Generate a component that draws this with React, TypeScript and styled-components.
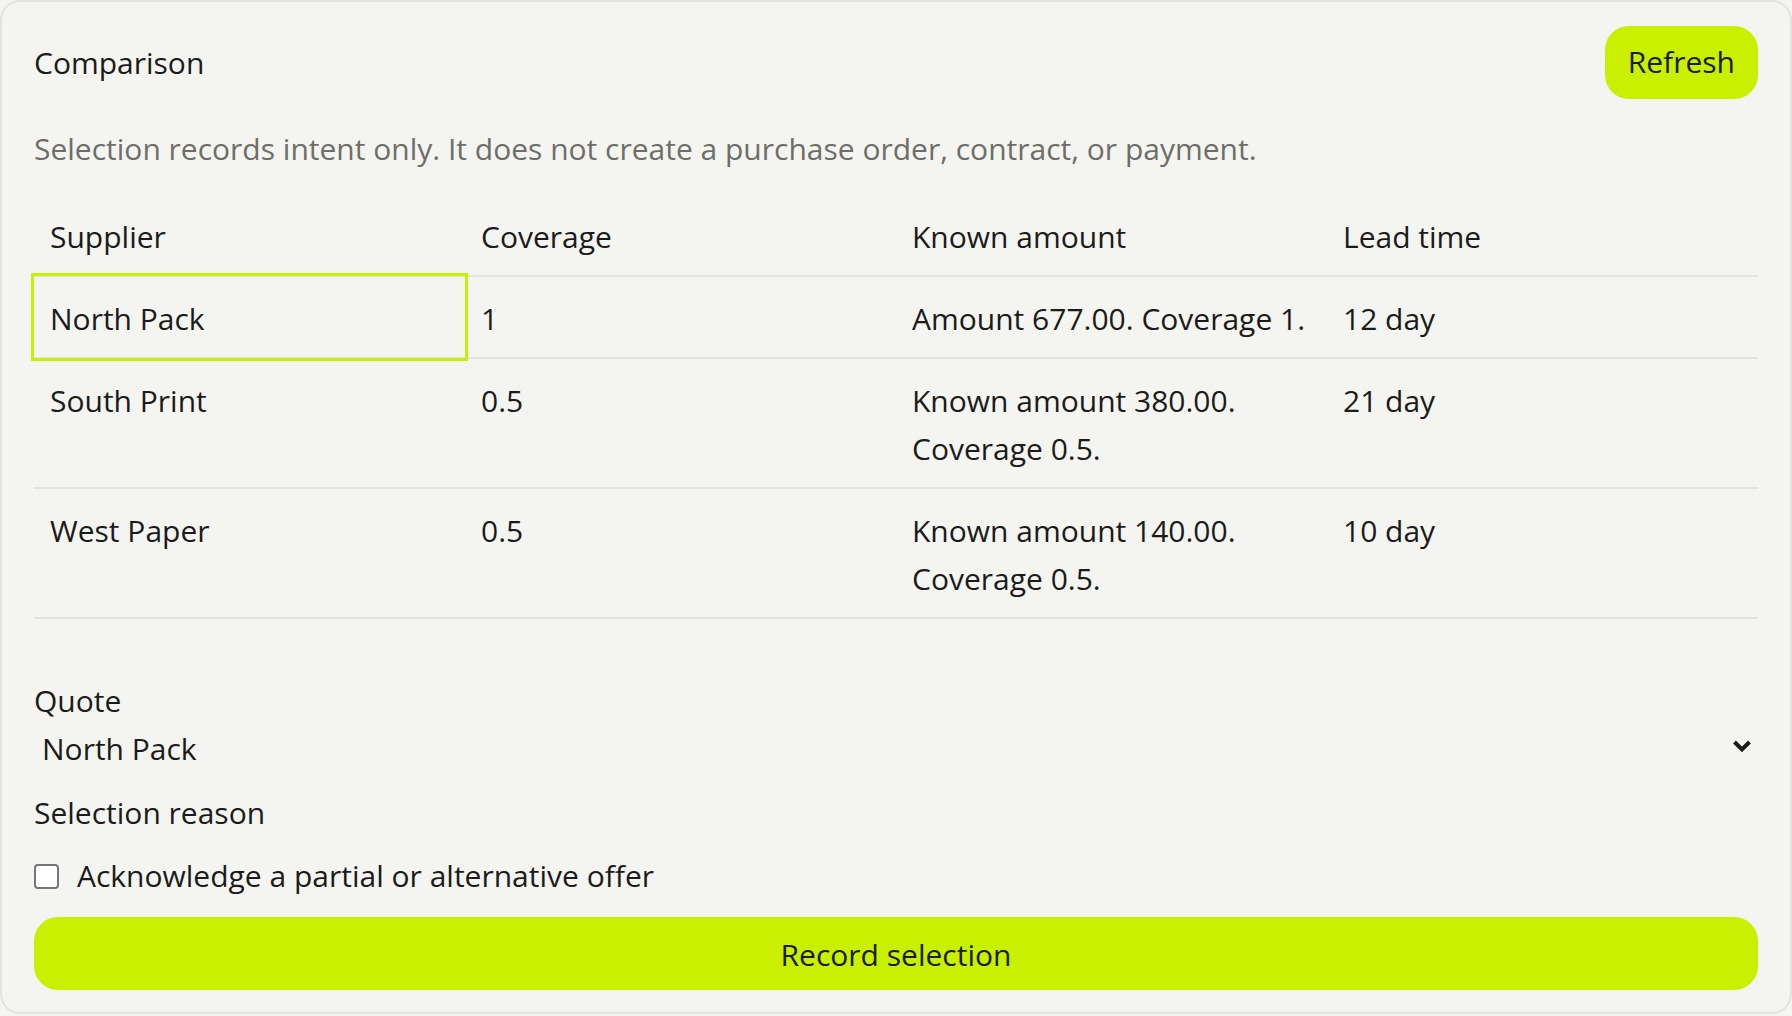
import React, { useState } from 'react'
import styled, { createGlobalStyle } from 'styled-components'

type Quote = {
  id: string
  supplier: string
  coverage: string
  known: string
  lead: string
}

const quotes: Quote[] = [
  { id: 'north', supplier: 'North Pack', coverage: '1', known: 'Amount 677.00. Coverage 1.', lead: '12 day' },
  { id: 'south', supplier: 'South Print', coverage: '0.5', known: 'Known amount 380.00. Coverage 0.5.', lead: '21 day' },
  { id: 'west', supplier: 'West Paper', coverage: '0.5', known: 'Known amount 140.00. Coverage 0.5.', lead: '10 day' },
]

const App = () => {
  const [selected, setSelected] = useState('north')
  const [partial, setPartial] = useState(false)

  return (
    <>
      <GlobalStyle />
      <Card>
        <Header>
          <Title>Comparison</Title>
          <PillButton type="button">Refresh</PillButton>
        </Header>
        <Note>Selection records intent only. It does not create a purchase order, contract, or payment.</Note>
        <Table>
          <thead>
            <tr>
              <HeadCell>Supplier</HeadCell>
              <HeadCell>Coverage</HeadCell>
              <HeadCell>Known amount</HeadCell>
              <HeadCell>Lead time</HeadCell>
            </tr>
          </thead>
          <tbody>
            {quotes.map((q) => (
              <tr key={q.id}>
                <Cell $active={q.id === selected}>{q.supplier}</Cell>
                <Cell>{q.coverage}</Cell>
                <Cell>{q.known}</Cell>
                <Cell>{q.lead}</Cell>
              </tr>
            ))}
          </tbody>
        </Table>

        <Form onSubmit={(e) => e.preventDefault()}>
          <FieldLabel htmlFor="quote">Quote</FieldLabel>
          <SelectWrap>
            <Select id="quote" value={selected} onChange={(e) => setSelected(e.target.value)}>
              {quotes.map((q) => (
                <option key={q.id} value={q.id}>{q.supplier}</option>
              ))}
            </Select>
            <Chevron width="22" height="16" viewBox="0 0 22 16">
              <path d="M3.5 4l7.5 7.5 7.5-7.5" fill="none" stroke="#1b1b1b" strokeWidth="4" />
            </Chevron>
          </SelectWrap>
          <ReasonLabel>Selection reason</ReasonLabel>
          <CheckRow>
            <Checkbox type="checkbox" checked={partial} onChange={(e) => setPartial(e.target.checked)} />
            Acknowledge a partial or alternative offer
          </CheckRow>
          <WideButton type="submit">Record selection</WideButton>
        </Form>
      </Card>
    </>
  )
}

export default App

const GlobalStyle = createGlobalStyle`
  html, body {
    margin: 0;
    padding: 0;
    background: #f4f5f0;
  }
  body {
    font-family: "Open Sans", "Noto Sans", sans-serif;
    font-size: 30px;
    line-height: 48px;
    color: #1b1b1b;
  }
  * { box-sizing: border-box; }
`

const Card = styled.div`
  border: 2px solid #e3e4de;
  border-radius: 20px;
  background: #f4f5f0;
  padding: 24px 32px 22px;
`

const Header = styled.div`
  display: flex;
  align-items: center;
  justify-content: space-between;
`

const Title = styled.h2`
  margin: 0;
  font-size: 30px;
  font-weight: 400;
`

const PillButton = styled.button`
  font: inherit;
  color: #1b1b1b;
  background: #c8f000;
  border: none;
  border-radius: 24px;
  padding: 12px 23px 13px;
  cursor: pointer;
`

const Note = styled.p`
  margin: 26px 0 0;
  color: #6e6e68;
`

const Table = styled.table`
  width: 100%;
  margin-top: 22px;
  border-collapse: collapse;
  table-layout: fixed;
`

const HeadCell = styled.th`
  text-align: left;
  font-weight: 400;
  padding: 18px 16px 14px;
  border-bottom: 2px solid #e3e4de;
`

const Cell = styled.td<{ $active?: boolean }>`
  padding: 18px 16px 14px;
  vertical-align: top;
  border-bottom: 2px solid #e3e4de;
  outline: ${(p) => (p.$active ? '3px solid #c8f000' : 'none')};
`

const Form = styled.form`
  display: flex;
  flex-direction: column;
  margin-top: 58px;
`

const FieldLabel = styled.label`
  display: block;
`

const SelectWrap = styled.div`
  position: relative;
`

const Select = styled.select`
  appearance: none;
  width: 100%;
  font: inherit;
  color: #1b1b1b;
  background: transparent;
  border: none;
  padding: 0 40px 0 8px;
  height: 48px;
  outline: none;
`

const Chevron = styled.svg`
  position: absolute;
  right: 5px;
  top: 13px;
  pointer-events: none;
`

const ReasonLabel = styled.label`
  display: block;
  margin-top: 16px;
`

const CheckRow = styled.label`
  display: flex;
  align-items: center;
  gap: 18px;
  margin-top: 15px;
`

const Checkbox = styled.input`
  appearance: none;
  width: 25px;
  height: 25px;
  margin: 0;
  border: 2px solid #767676;
  border-radius: 4px;
  background: #fff;
  flex: none;
`

const WideButton = styled.button`
  margin-top: 17px;
  height: 73px;
  padding: 2px 0 0;
  font: inherit;
  color: #1b1b1b;
  background: #c8f000;
  border: none;
  border-radius: 24px;
  cursor: pointer;
`
